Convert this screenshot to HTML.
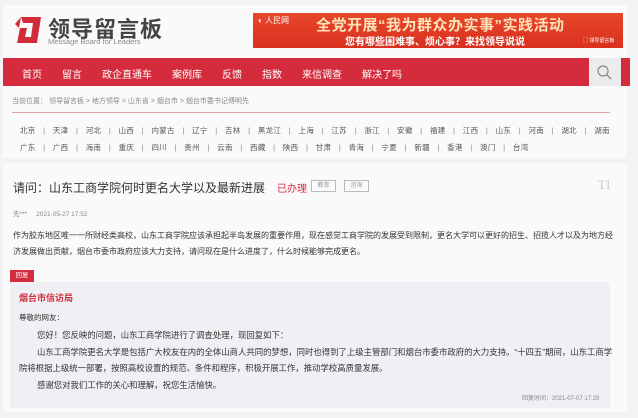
<!DOCTYPE html>
<html><head><meta charset="utf-8"><style>
*{margin:0;padding:0;box-sizing:border-box}
body{width:638px;height:418px;background:#f3f3f6;font-family:"Liberation Sans","Noto Sans CJK SC",sans-serif;position:relative;overflow:hidden;color:#333}
.a{position:absolute;white-space:nowrap}
.card{position:absolute;background:#fff;left:3px;width:624px}
.nav span{margin-right:20px}
.prov{font-size:7.5px;color:#555;letter-spacing:0.3px}
.prov i{font-style:normal;color:#888;margin:0 7.5px}
</style></head><body>
<div class="card" style="top:5px;height:153px;background:#fafafb"></div>
<div class="card" style="top:163px;height:249px;background:#fafafb"></div>
<svg class="a" style="left:13px;top:16px" width="30" height="28" viewBox="0 0 30 28"><path d="M8 1H28L24 27H4L7 12H14L12 21H18L20 7H10Z" fill="#d22b3a"/><path d="M2 8L8 1 6 12Z" fill="#d22b3a"/></svg>
<div class="a" style="left:48px;top:12px;font-size:22px;font-weight:bold;color:#444;letter-spacing:1px">领导留言板</div>
<div class="a" style="left:48px;top:37px;font-size:7.5px;color:#888">Message Board for Leaders</div>
<div class="a" style="left:253px;top:13px;width:370px;height:35px;background:linear-gradient(#e8472b,#d9301f)"></div>
<div class="a" style="left:258px;top:15px;font-size:8px;color:#fff">◐ 人民网</div>
<div class="a" style="left:316px;top:14px;font-size:15px;font-weight:bold;color:#fde3b8;letter-spacing:0.5px">全党开展“我为群众办实事”实践活动</div>
<div class="a" style="left:345px;top:33px;font-size:10px;font-weight:bold;color:#fff">您有哪些困难事、烦心事？来找领导说说</div>
<div class="a" style="left:583px;top:37px;font-size:5px;color:#fff">▢ 领导留言板</div>
<div class="a" style="left:3px;top:58px;width:586px;height:28px;background:#d52c3d"></div>
<div class="a" style="left:589px;top:58px;width:32px;height:28px;background:#ececee"></div>
<div class="a" style="left:621px;top:58px;width:9px;height:28px;background:#d52c3d"></div>
<svg class="a" style="left:596px;top:64px" width="18" height="16"><circle cx="7" cy="7" r="5" fill="none" stroke="#888" stroke-width="1.2"/><path d="M11 11L15 15" stroke="#888" stroke-width="1.4"/></svg>
<div class="a nav" style="left:22px;top:66px;font-size:10px;color:#fff"><span>首页</span><span>留言</span><span>政企直通车</span><span>案例库</span><span>反馈</span><span>指数</span><span>来信调查</span><span>解决了吗</span></div>
<div class="a" style="left:12px;top:96px;font-size:7px;color:#888">当前位置： 领导留言板 &gt; 地方领导 &gt; 山东省 &gt; 烟台市 &gt; 烟台市委书记傅明先</div>
<div class="a" style="left:12px;top:112px;width:598px;height:1px;background:#e0a0a5"></div>
<div class="a prov" style="left:20px;top:125px">北京<i>|</i>天津<i>|</i>河北<i>|</i>山西<i>|</i>内蒙古<i>|</i>辽宁<i>|</i>吉林<i>|</i>黑龙江<i>|</i>上海<i>|</i>江苏<i>|</i>浙江<i>|</i>安徽<i>|</i>福建<i>|</i>江西<i>|</i>山东<i>|</i>河南<i>|</i>湖北<i>|</i>湖南</div>
<div class="a prov" style="left:20px;top:142px">广东<i>|</i>广西<i>|</i>海南<i>|</i>重庆<i>|</i>四川<i>|</i>贵州<i>|</i>云南<i>|</i>西藏<i>|</i>陕西<i>|</i>甘肃<i>|</i>青海<i>|</i>宁夏<i>|</i>新疆<i>|</i>香港<i>|</i>澳门<i>|</i>台湾</div>
<div class="a" style="left:13px;top:179px;font-size:12px;color:#333">请问：山东工商学院何时更名大学以及最新进展</div>
<div class="a" style="left:277px;top:180px;font-size:10px;color:#d52c3d">已办理</div>
<div class="a" style="left:311px;top:180px;width:25px;height:12px;border:1px solid #bbb;font-size:6px;color:#999;text-align:center;line-height:10px">教育</div>
<div class="a" style="left:344px;top:180px;width:25px;height:12px;border:1px solid #bbb;font-size:6px;color:#999;text-align:center;line-height:10px">咨询</div>
<div class="a" style="left:598px;top:177px;font-size:13px;color:#ccc;font-family:'Liberation Serif',serif">TI</div>
<div class="a" style="left:13px;top:208px;font-size:6.5px;color:#888">先***&nbsp;&nbsp;&nbsp;&nbsp;&nbsp;2021-05-27 17:52</div>
<div class="a" style="left:13px;top:228px;font-size:8px;color:#333;line-height:16px">作为胶东地区唯一一所财经类高校，山东工商学院应该承担起半岛发展的重要作用，现在感觉工商学院的发展受到限制，更名大学可以更好的招生、招揽人才以及为地方经<br>济发展做出贡献，烟台市委市政府应该大力支持，请问现在是什么进度了，什么时候能够完成更名。</div>
<div class="a" style="left:10px;top:270px;width:24px;height:12px;background:#d52c3d;color:#fff;font-size:6.5px;text-align:center;line-height:12px">回复</div>
<div class="a" style="left:10px;top:282px;width:600px;height:126px;background:#f0f0f4"></div>
<div class="a" style="left:19px;top:291px;font-size:9px;font-weight:bold;color:#d52c3d">烟台市信访局</div>
<div class="a" style="left:19px;top:312px;font-size:7.5px;color:#333">尊敬的网友：</div>
<div class="a" style="left:19px;top:327px;font-size:8.4px;color:#333;line-height:16.5px"><span style="padding-left:18px"></span>您好！您反映的问题，山东工商学院进行了调查处理，现回复如下：<br><span style="padding-left:18px"></span>山东工商学院更名大学是包括广大校友在内的全体山商人共同的梦想，同时也得到了上级主管部门和烟台市委市政府的大力支持。“十四五”期间，山东工商学<br>院将根据上级统一部署，按照高校设置的规范、条件和程序，积极开展工作，推动学校高质量发展。<br><span style="padding-left:18px"></span>感谢您对我们工作的关心和理解，祝您生活愉快。</div>
<div class="a" style="left:522px;top:393px;font-size:6px;color:#888">回复时间：2021-07-07 17:29</div>
</body></html>
